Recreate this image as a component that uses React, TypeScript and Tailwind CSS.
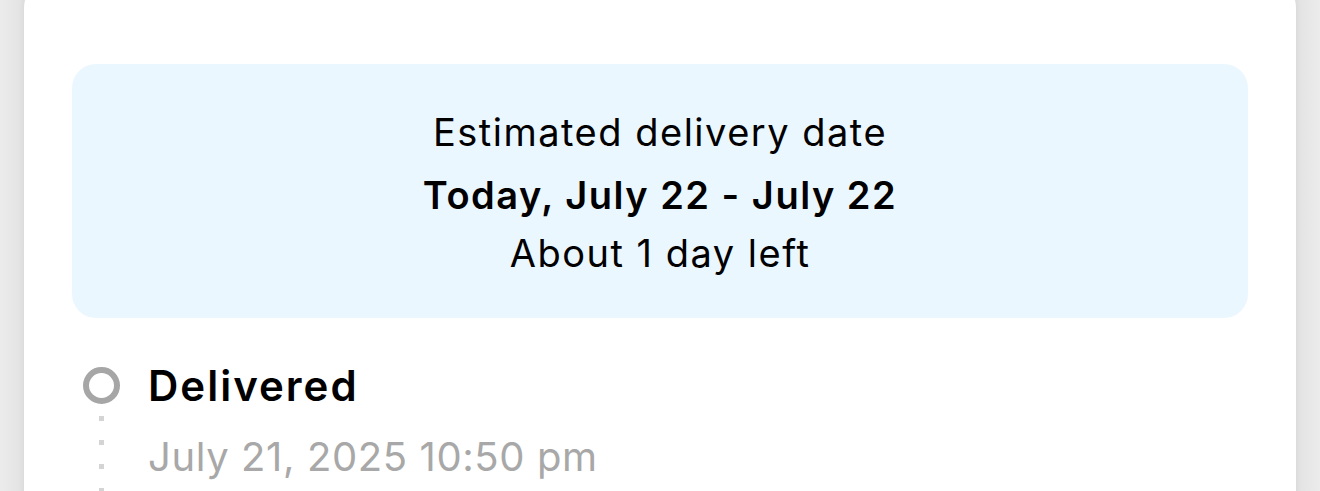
export default function App() {
  return (
    <div className="h-[491px] w-[1320px] overflow-hidden bg-[#e7e7e7] font-['Inter',sans-serif]">
      <div className="flex h-full justify-center bg-[linear-gradient(to_right,#ececec_0,#e2e2e2_24px,#e2e2e2_1296px,#ececec_100%)]">
        <div className="-mt-6 h-[560px] w-[1272px] rounded-[32px] bg-white px-12 pt-[88px] shadow-[0_0_6px_rgba(0,0,0,0.06)]">
          {/* Estimated delivery banner */}
          <div className="flex h-[254px] flex-col items-center rounded-3xl bg-[#ebf7fe] pt-[39px] text-black tracking-[1.5px]">
            <p className="text-[38px] leading-[58px]">Estimated delivery date</p>
            <p className="mt-[5px] text-[38px] font-semibold leading-[58px]">Today, July 22 - July 22</p>
            <p className="text-[38px] leading-[58px]">About 1 day left</p>
          </div>

          {/* Timeline */}
          <div className="mt-[49px] flex pl-[11px]">
            <div className="flex w-[37px] flex-col items-center">
              <div className="h-[37px] w-[37px] rounded-full border-[6px] border-[#a6a6a6]" />
              <div className="mt-3 h-[120px] w-[5px] bg-[repeating-linear-gradient(to_bottom,#d4d4d4_0_5px,transparent_5px_24px)]" />
            </div>
            <div className="ml-7">
              <p className="-mt-[11px] text-[42px] font-semibold leading-[60px] tracking-[2px] text-black">Delivered</p>
              <p className="mt-[16px] text-[40px] leading-[50px] tracking-[0.6px] text-[#a8a8a8]">July 21, 2025 10:50 pm</p>
            </div>
          </div>
        </div>
      </div>
    </div>
  );
}
